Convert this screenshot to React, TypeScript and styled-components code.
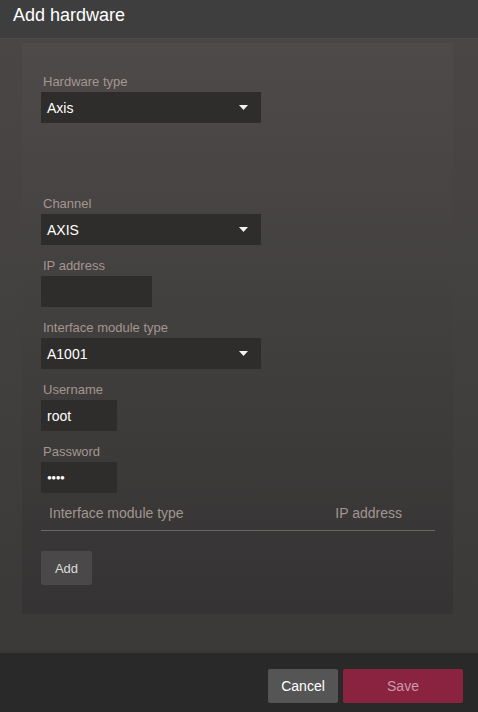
import styled, { createGlobalStyle } from "styled-components";

const GlobalStyle = createGlobalStyle`
  html, body {
    margin: 0;
    padding: 0;
    background: #292929;
  }
  body {
    font-family: "Liberation Sans", Arial, sans-serif;
  }
  * {
    box-sizing: border-box;
  }
`;

const Caret = () => (
  <svg width="9" height="5" viewBox="0 0 9 5">
    <path d="M0 0 H9 L4.5 5 Z" fill="#f2f2f2" />
  </svg>
);

const Dialog = styled.div`
  width: 478px;
  height: 712px;
  display: flex;
  flex-direction: column;
  background: #292929;
`;

const Header = styled.div`
  height: 39px;
  flex-shrink: 0;
  background: #3e3e3e;
  color: #ffffff;
  font-size: 18px;
  padding: 5px 13px 0;
  border-bottom: 1px solid #4f4b4b;
`;

const Body = styled.div`
  flex: 1;
  padding: 4px 25px 39px 22px;
  background: linear-gradient(#4a4646, #3a3938);
  display: flex;
`;

const Panel = styled.div`
  flex: 1;
  padding: 31px 18px 0 19px;
  background: linear-gradient(#4e4a4a, #353333);
  display: flex;
  flex-direction: column;
`;

const Field = styled.div`
  display: flex;
  flex-direction: column;
  align-items: flex-start;
  gap: 2px;
  margin-bottom: 13px;
`;

const Spacer = styled.div`
  height: 60px;
`;

const Label = styled.div`
  font-size: 13px;
  line-height: 16px;
  padding-left: 2px;
  color: #a3968f;
`;

const Select = styled.div`
  width: 220px;
  height: 31px;
  background: #2f2c2c;
  color: #ffffff;
  font-size: 14px;
  display: flex;
  align-items: center;
  justify-content: space-between;
  padding: 0 13px 0 6px;
`;

const Input = styled.div<{ $width: number }>`
  width: ${(p) => p.$width}px;
  height: 31px;
  background: #2f2c2c;
  color: #ffffff;
  font-size: 14px;
  display: flex;
  align-items: center;
  padding: 0 6px;
`;

const Dots = styled.span`
  font-size: 8px;
  letter-spacing: -0.5px;
`;

const TableHead = styled.div`
  width: 394px;
  display: flex;
  justify-content: space-between;
  padding: 0 33px 9px 8px;
  margin-top: -1px;
  border-bottom: 1px solid #6b6767;
  font-size: 14px;
  line-height: 16px;
  color: #a3968f;
`;

const AddButton = styled.div`
  margin-top: 20px;
  width: 51px;
  height: 34px;
  background: #4a4848;
  border-radius: 2px;
  color: #dddddd;
  font-size: 13px;
  display: flex;
  align-items: center;
  justify-content: center;
`;

const Footer = styled.div`
  height: 59px;
  flex-shrink: 0;
  display: flex;
  justify-content: flex-end;
  align-items: flex-start;
  gap: 5px;
  padding: 16px 15px 0 0;
  background: #292929;
`;

const Button = styled.div<{ $primary?: boolean }>`
  width: ${(p) => (p.$primary ? 120 : 70)}px;
  height: 34px;
  border-radius: 2px;
  background: ${(p) => (p.$primary ? "#8a2340" : "#555555")};
  color: ${(p) => (p.$primary ? "#c99aab" : "#ffffff")};
  font-size: 14px;
  display: flex;
  align-items: center;
  justify-content: center;
`;

export default function App() {
  return (
    <>
      <GlobalStyle />
      <Dialog>
        <Header>Add hardware</Header>
        <Body>
          <Panel>
            <Field>
              <Label>Hardware type</Label>
              <Select>
                Axis
                <Caret />
              </Select>
            </Field>
            <Spacer />
            <Field>
              <Label>Channel</Label>
              <Select>
                AXIS
                <Caret />
              </Select>
            </Field>
            <Field>
              <Label>IP address</Label>
              <Input $width={111} />
            </Field>
            <Field>
              <Label>Interface module type</Label>
              <Select>
                A1001
                <Caret />
              </Select>
            </Field>
            <Field>
              <Label>Username</Label>
              <Input $width={76}>root</Input>
            </Field>
            <Field>
              <Label>Password</Label>
              <Input $width={76}>
                <Dots>●●●●</Dots>
              </Input>
            </Field>
            <TableHead>
              <span>Interface module type</span>
              <span>IP address</span>
            </TableHead>
            <AddButton>Add</AddButton>
          </Panel>
        </Body>
        <Footer>
          <Button>Cancel</Button>
          <Button $primary>Save</Button>
        </Footer>
      </Dialog>
    </>
  );
}
